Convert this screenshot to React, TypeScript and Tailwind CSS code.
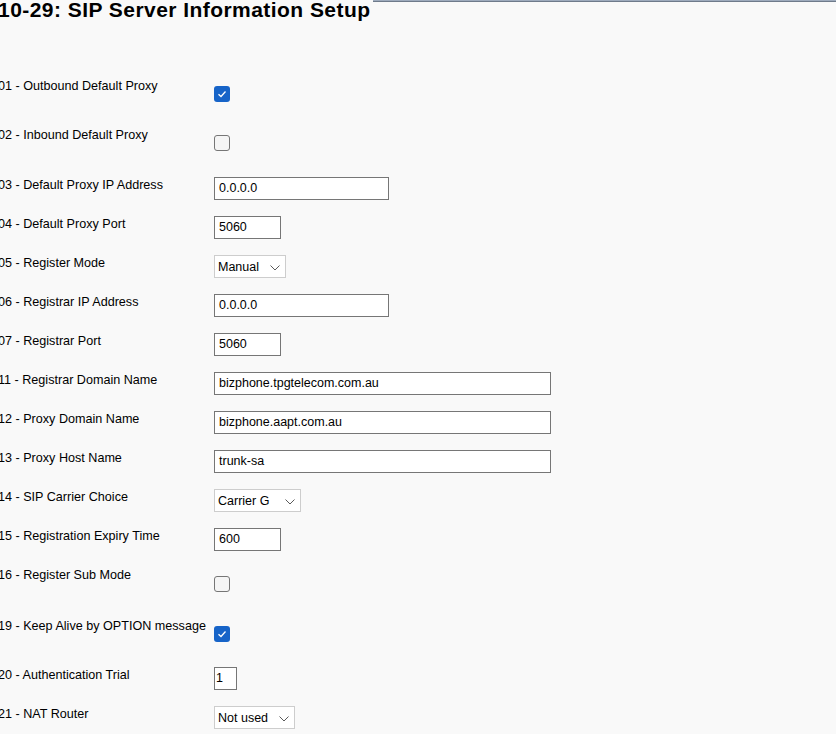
import React from "react";

const font = { fontFamily: '"Liberation Sans", Arial, sans-serif' };

function Chevron() {
  return (
    <svg width="10" height="6" viewBox="0 0 10 6" className="shrink-0">
      <path d="M0.5 0.5 L5 5 L9.5 0.5" fill="none" stroke="#5a5a5a" strokeWidth="1" />
    </svg>
  );
}

function Checked() {
  return (
    <div className="w-[16px] h-[16px] rounded-[3px] bg-[#1764c8] flex items-center justify-center">
      <svg width="10" height="8" viewBox="0 0 10 8">
        <path d="M1.5 4.2 L4 6.5 L8.5 1.5" fill="none" stroke="#ffffff" strokeWidth="1.3" />
      </svg>
    </div>
  );
}

function Unchecked() {
  return <div className="w-[16px] h-[16px] rounded-[3px] border border-[#767676] bg-[#f5f5f5]" />;
}

function TextBox({ w, value }: { w: string; value: string }) {
  return (
    <div
      className={`${w} h-[23px] border border-[#767676] bg-white flex items-center pl-[4px] text-[12.5px] text-black leading-none`}
    >
      {value}
    </div>
  );
}

function SelectBox({ w, value }: { w: string; value: string }) {
  return (
    <div
      className={`${w} h-[23px] border border-[#cdcdcd] bg-white flex items-center justify-between pl-[3px] pr-[5px] pt-[2px] text-[12.5px] text-black leading-none`}
    >
      <span>{value}</span>
      <Chevron />
    </div>
  );
}

function Row({
  label,
  h,
  ctrlTop,
  children,
}: {
  label: string;
  h: string;
  ctrlTop: string;
  children: React.ReactNode;
}) {
  return (
    <div className={`flex ${h}`}>
      <div className="w-[216px] shrink-0 ml-[-2px] pt-[1px] text-[12.6px] leading-[15px] text-black whitespace-nowrap">
        {label}
      </div>
      <div className={ctrlTop}>{children}</div>
    </div>
  );
}

export default function App() {
  return (
    <div className="w-[836px] h-[734px] overflow-hidden bg-[#f9f9f9]" style={font}>
      <div className="flex">
        <h1 className="ml-[-2px] pr-[3px] text-[21px] font-bold leading-[20px] tracking-[0.45px] text-black whitespace-nowrap bg-[#f9f9f9] h-[20px]">
          10-29: SIP Server Information Setup
        </h1>
        <div className="flex-1 flex flex-col">
          <div className="h-[1px] bg-[#9eabbd]" />
          <div className="h-[1px] bg-[#6f7b8b]" />
        </div>
      </div>
      <div className="pt-[58px]">
        <Row label="01 - Outbound Default Proxy" h="h-[49px]" ctrlTop="pt-[8px]">
          <Checked />
        </Row>
        <Row label="02 - Inbound Default Proxy" h="h-[50px]" ctrlTop="pt-[8px]">
          <Unchecked />
        </Row>
        <Row label="03 - Default Proxy IP Address" h="h-[39px]" ctrlTop="">
          <TextBox w="w-[175px]" value="0.0.0.0" />
        </Row>
        <Row label="04 - Default Proxy Port" h="h-[39px]" ctrlTop="">
          <TextBox w="w-[67px]" value="5060" />
        </Row>
        <Row label="05 - Register Mode" h="h-[39px]" ctrlTop="">
          <SelectBox w="w-[72px]" value="Manual" />
        </Row>
        <Row label="06 - Registrar IP Address" h="h-[39px]" ctrlTop="">
          <TextBox w="w-[175px]" value="0.0.0.0" />
        </Row>
        <Row label="07 - Registrar Port" h="h-[39px]" ctrlTop="">
          <TextBox w="w-[67px]" value="5060" />
        </Row>
        <Row label="11 - Registrar Domain Name" h="h-[39px]" ctrlTop="">
          <TextBox w="w-[337px]" value="bizphone.tpgtelecom.com.au" />
        </Row>
        <Row label="12 - Proxy Domain Name" h="h-[39px]" ctrlTop="">
          <TextBox w="w-[337px]" value="bizphone.aapt.com.au" />
        </Row>
        <Row label="13 - Proxy Host Name" h="h-[39px]" ctrlTop="">
          <TextBox w="w-[337px]" value="trunk-sa" />
        </Row>
        <Row label="14 - SIP Carrier Choice" h="h-[39px]" ctrlTop="">
          <SelectBox w="w-[87px]" value="Carrier G" />
        </Row>
        <Row label="15 - Registration Expiry Time" h="h-[39px]" ctrlTop="">
          <TextBox w="w-[67px]" value="600" />
        </Row>
        <Row label="16 - Register Sub Mode" h="h-[51px]" ctrlTop="pt-[9px]">
          <Unchecked />
        </Row>
        <Row label="19 - Keep Alive by OPTION message" h="h-[49px]" ctrlTop="pt-[8px]">
          <Checked />
        </Row>
        <Row label="20 - Authentication Trial" h="h-[39px]" ctrlTop="">
          <div className="w-[23px] h-[23px] border border-[#767676] bg-white flex items-center pl-[1px] text-[12.5px] text-black leading-none">
            1
          </div>
        </Row>
        <Row label="21 - NAT Router" h="h-[39px]" ctrlTop="">
          <SelectBox w="w-[81px]" value="Not used" />
        </Row>
      </div>
    </div>
  );
}
